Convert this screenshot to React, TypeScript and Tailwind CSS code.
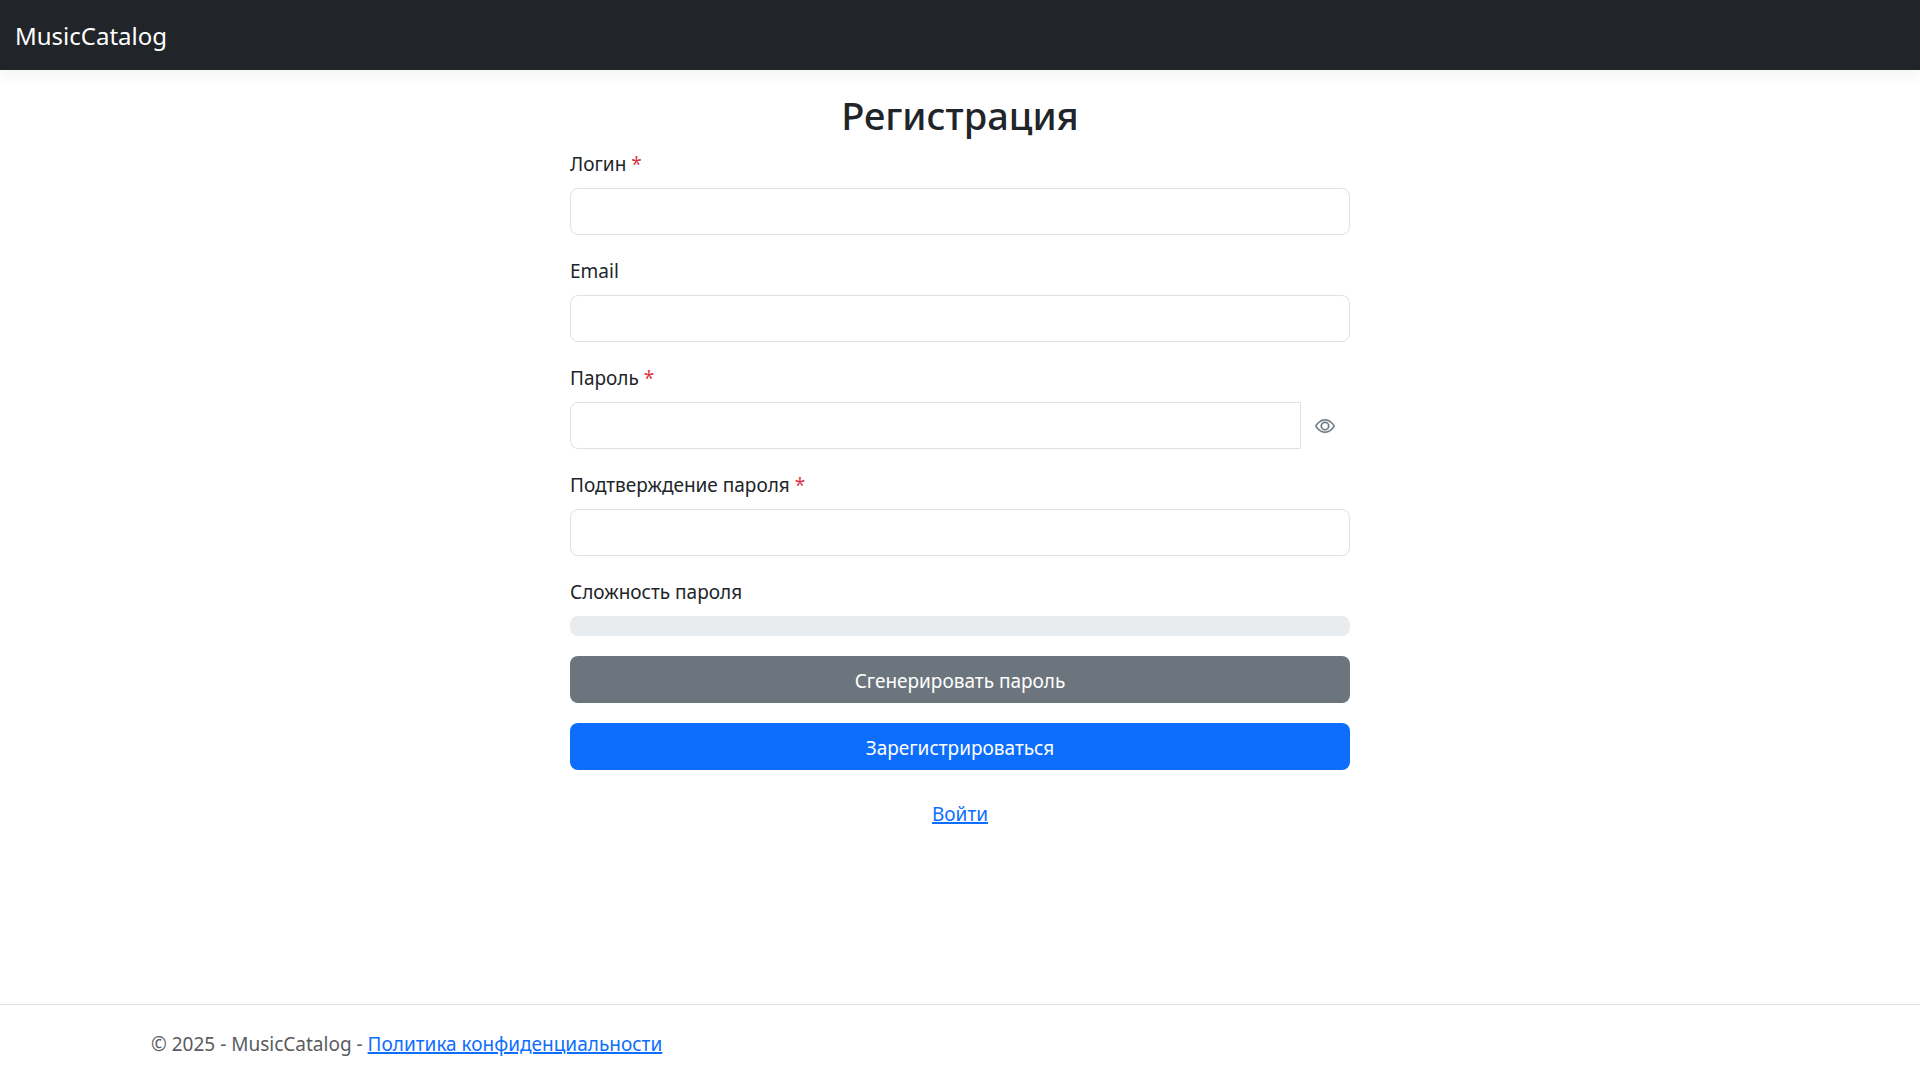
import React, { useState } from "react";
import { BsEye } from "react-icons/bs";

const inputClass =
  "block h-[47px] w-full min-w-0 border border-[#dee2e6] bg-white px-4 py-2 text-[#212529] outline-none focus:border-[#86b7fe]";

const linkClass = "text-[#0d6efd] underline decoration-2";

function FieldLabel({ id, label, required }: { id: string; label: string; required: boolean }) {
  return (
    <label htmlFor={id} className="mb-2 block w-fit">
      {label}
      {required && <span className="text-[#dc3545]"> *</span>}
    </label>
  );
}

function Field({ id, label, required = false, type = "text" }: { id: string; label: string; required?: boolean; type?: string }) {
  return (
    <div className="mb-5">
      <FieldLabel id={id} label={label} required={required} />
      <input id={id} type={type} className={`${inputClass} rounded-lg`} />
    </div>
  );
}

export default function App() {
  const [visible, setVisible] = useState(false);
  return (
    <div className="flex min-h-screen flex-col bg-white font-['Noto_Sans',sans-serif] text-[19px] leading-8 text-[#212529]">
      <header className="mb-5 bg-[#212529] px-[15px] pt-4 pb-[14px] shadow-[0_5px_15px_rgba(0,0,0,0.05)]">
        <a href="#" className="block w-fit text-[24px] leading-10 text-white">MusicCatalog</a>
      </header>
      <main className="mx-auto w-full max-w-[780px] grow">
        <h2 className="mb-[10px] pt-0.5 text-center text-[38px] leading-[46px] font-medium">Регистрация</h2>
        <form>
          <Field id="login" label="Логин" required />
          <Field id="email" label="Email" type="email" />
          <div className="mb-5">
            <FieldLabel id="password" label="Пароль" required />
            <div className="flex">
              <input id="password" type={visible ? "text" : "password"} className={`${inputClass} flex-1 rounded-l-lg`} />
              <button type="button" aria-label="Показать пароль" onClick={() => setVisible(!visible)} className="flex w-[49px] items-center pl-[14px] text-[#6c757d]">
                <BsEye size={20} strokeWidth={0.3} />
              </button>
            </div>
          </div>
          <Field id="confirm" label="Подтверждение пароля" required type="password" />
          <div className="mb-5">
            <p className="mb-2">Сложность пароля</p>
            <div role="progressbar" aria-label="Сложность пароля" aria-valuenow={0} className="h-5 rounded-lg bg-[#e9ecef]" />
          </div>
          <button type="button" className="mb-5 block h-[47px] w-full rounded-lg bg-[#6c757d] pt-0.5 text-white">Сгенерировать пароль</button>
          <button type="submit" className="block h-[47px] w-full rounded-lg bg-[#0d6efd] pt-0.5 text-white">Зарегистрироваться</button>
        </form>
        <p className="mt-7 text-center">
          <a href="#" className={linkClass}>Войти</a>
        </p>
      </main>
      <footer className="border-t border-[#dee2e6] text-[#595c5f]">
        <div className="mx-auto w-full max-w-[1650px] px-4 pt-[23px] pb-5">
          © 2025 - MusicCatalog - <a href="#" className={linkClass}>Политика конфиденциальности</a>
        </div>
      </footer>
    </div>
  );
}
